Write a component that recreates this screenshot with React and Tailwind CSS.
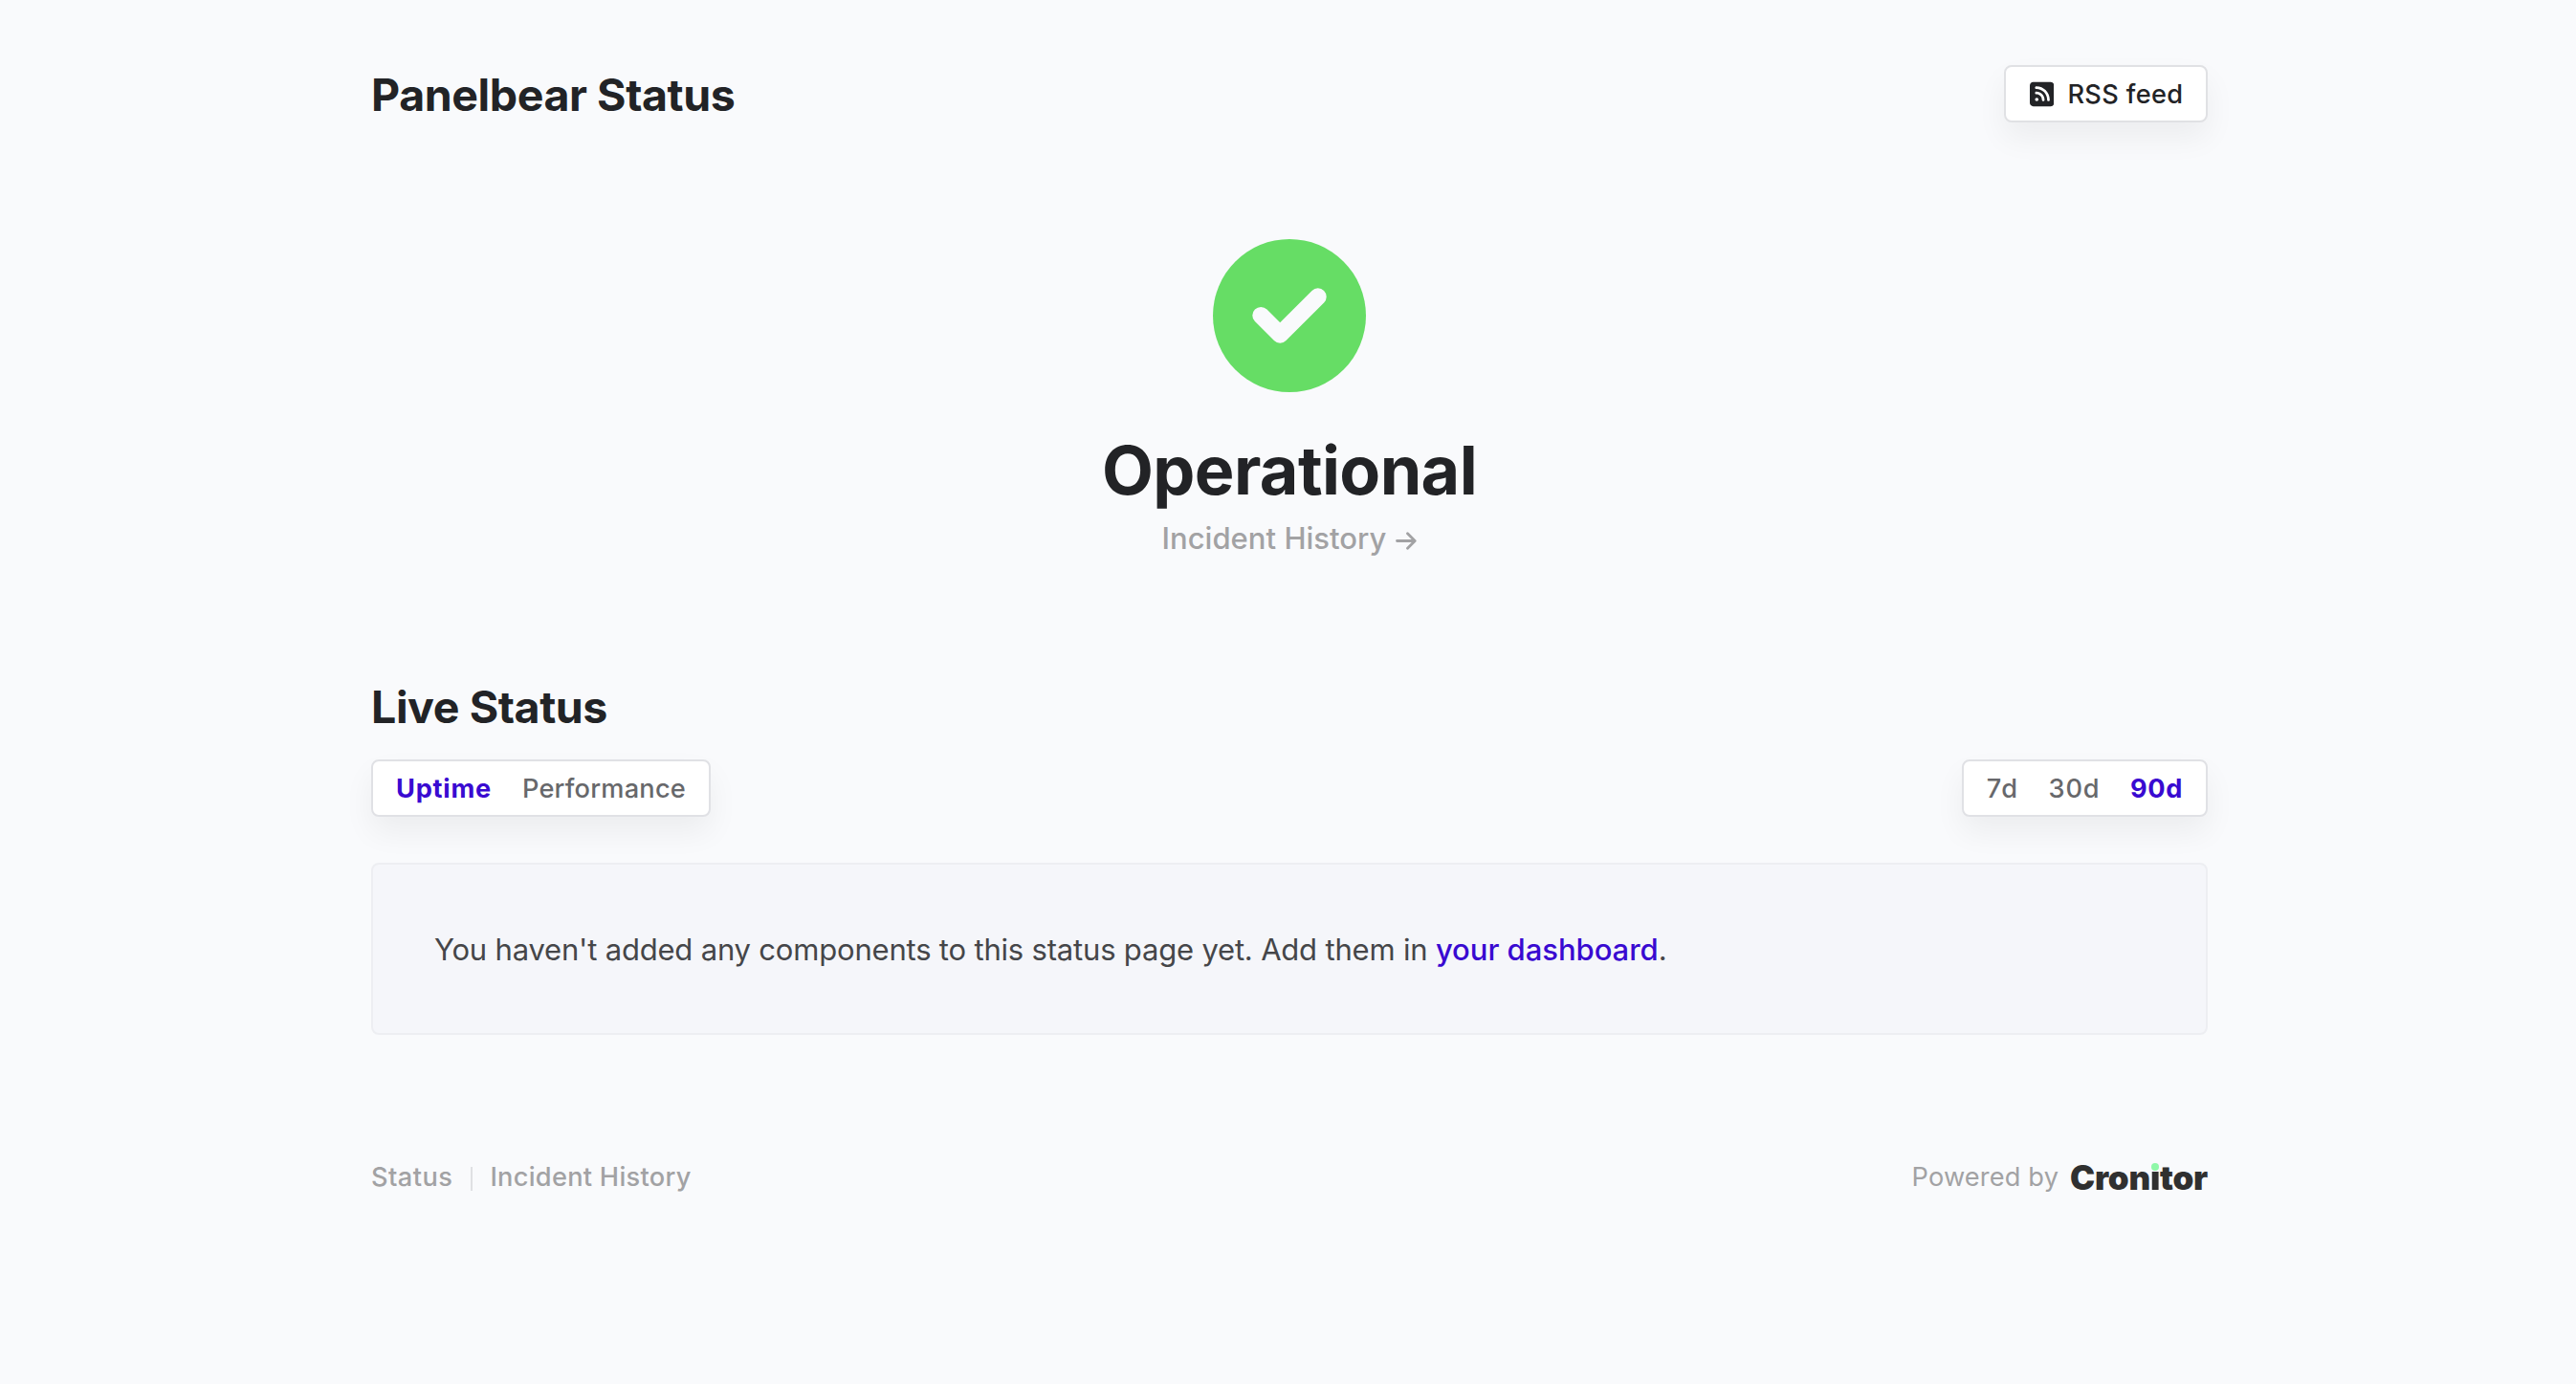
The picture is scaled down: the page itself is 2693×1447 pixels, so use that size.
import { useState } from "react";
import { FaSquareRss } from "react-icons/fa6";

const VIEWS = [
  { id: "uptime", label: "Uptime", idle: "tracking-[0.6px]", active: "tracking-[0.76px]" },
  { id: "performance", label: "Performance", idle: "tracking-[0.22px]", active: "tracking-[0.3px]" },
];

const RANGES = [
  { id: "7d", label: "7d", idle: "tracking-[1.2px]", active: "tracking-[0.66px]" },
  { id: "30d", label: "30d", idle: "tracking-[0.85px]", active: "tracking-[0.66px]" },
  { id: "90d", label: "90d", idle: "tracking-[0.85px]", active: "tracking-[0.66px]" },
];

function CheckBadge() {
  return (
    <svg className="block size-40" viewBox="0 0 160 160" fill="none" aria-hidden="true">
      <circle cx="80" cy="80" r="80" fill="#66dd65" />
      <path
        d="M50.2 79.8L70.2 99.8L109.8 60.2"
        stroke="#f9fafc"
        strokeWidth="17.8"
        strokeLinecap="round"
        strokeLinejoin="round"
      />
    </svg>
  );
}

function ArrowIcon() {
  return (
    <svg className="mt-[5px] h-[19px] w-[22px]" viewBox="0 0 22 19" fill="none" aria-hidden="true">
      <path
        d="M1.5 9.5H20M12.5 1.7L20.2 9.5L12.5 17.3"
        stroke="currentColor"
        strokeWidth="2.8"
        strokeLinecap="round"
        strokeLinejoin="round"
      />
    </svg>
  );
}

function Toggle({ options, value, onChange, className }) {
  return (
    <div
      className={`flex h-[60px] items-center rounded-lg border-2 border-[#e0e1e5] bg-white px-6 pt-0.5 text-[27.2px] shadow-[0_16px_32px_rgba(0,0,0,0.055)] ${className}`}
    >
      {options.map((opt) => (
        <button
          key={opt.id}
          type="button"
          onClick={() => onChange(opt.id)}
          className={
            value === opt.id
              ? `font-bold text-[#390ad1] ${opt.active}`
              : `font-medium text-[#67686b] ${opt.idle}`
          }
        >
          {opt.label}
        </button>
      ))}
    </div>
  );
}

// The "i" is only painted below its dot; the brand green dot sits on top.
function CronitorLogo() {
  return (
    <span className="-mt-px text-[35px] leading-[42px] font-black tracking-[-0.25px] text-[#303030]">
      Cron
      <span className="relative bg-[linear-gradient(transparent_0_15px,#303030_15px)] bg-clip-text text-transparent">
        i
        <span className="absolute top-[6px] left-1/2 size-2 -translate-x-1/2 rounded-full bg-[#8ff8a8]" />
      </span>
      tor
    </span>
  );
}

function App() {
  const [view, setView] = useState("uptime");
  const [range, setRange] = useState("90d");

  return (
    <div className="min-h-screen bg-[#f9fafc] pt-[68px] font-['Inter',sans-serif] text-[#222326]">
      <div className="ml-[388px] w-[1920px]">
        <header className="flex h-[60px] items-center justify-between">
          <h1 className="pt-0.5 text-[46.5px] leading-[60px] font-bold tracking-[-0.41px]">
            Panelbear Status
          </h1>
          <a
            href="#rss"
            className="flex h-[60px] w-[213px] items-center rounded-lg border-2 border-[#e0e1e4] bg-white pl-[25px] text-[27.2px] font-medium tracking-[0.35px] shadow-[0_16px_32px_rgba(0,0,0,0.055)]"
          >
            <FaSquareRss className="mr-[14px] h-[29px] w-[25.4px]" />
            <span className="pt-0.5">RSS feed</span>
          </a>
        </header>

        <section className="mt-[122px] flex flex-col items-center">
          <CheckBadge />
          <h2 className="mt-[40px] text-[70px] leading-[84px] font-bold tracking-[-0.6px]">
            Operational
          </h2>
          <a
            href="#history"
            className="mt-[9px] flex items-center gap-[10px] text-[31px] leading-[40px] font-medium tracking-[0.03px] text-[#a2a2a4]"
          >
            Incident History
            <ArrowIcon />
          </a>
        </section>

        <section className="mt-[126px]">
          <h2 className="text-[46.5px] leading-[60px] font-bold tracking-[-0.4px]">Live Status</h2>
          <div className="mt-[25px] flex justify-between">
            <Toggle options={VIEWS} value={view} onChange={setView} className="gap-8" />
            <Toggle options={RANGES} value={range} onChange={setRange} className="gap-[31.4px]" />
          </div>
          <div className="mt-12 flex h-[180px] items-center rounded-lg border-2 border-[#edeef2] bg-[#f5f6fa] px-16">
            <p className="pt-0.5 text-[31px] leading-[48px] tracking-[-0.19px] text-[#454649]">
              You haven't added any components to this status page yet. Add them in{" "}
              <a href="#dashboard" className="font-medium tracking-[-0.04px] text-[#390ad1]">
                your dashboard
              </a>
              .
            </p>
          </div>
        </section>

        <footer className="mt-[128px] flex h-[42px] items-center justify-between text-[27.2px] leading-[40px] text-[#a2a2a4]">
          <nav className="flex items-center font-medium">
            <a href="#status" className="tracking-[0.46px]">
              Status
            </a>
            <span className="mt-0.5 mr-[18px] ml-[19px] h-[25px] w-0.5 bg-[#dfe0e3]" />
            <a href="#history" className="tracking-[0.28px]">
              Incident History
            </a>
          </nav>
          <div className="flex items-center gap-3">
            <span className="tracking-[0.15px]">Powered by</span>
            <CronitorLogo />
          </div>
        </footer>
      </div>
    </div>
  );
}

export default App;
